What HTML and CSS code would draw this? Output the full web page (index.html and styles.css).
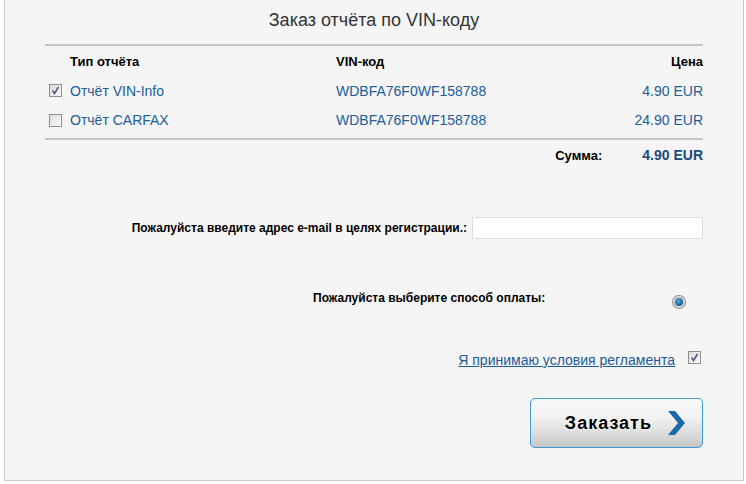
FILE: index.html
```html
<!DOCTYPE html>
<html lang="ru">
<head>
<meta charset="utf-8">
<link rel="stylesheet" href="styles.css">
</head>
<body>
<div class="panel">
  <h1 class="title">Заказ отчёта по VIN-коду</h1>
  <div class="table">
    <div class="row head">
      <div class="c-type">Тип отчёта</div>
      <div class="c-vin">VIN-код</div>
      <div class="c-price">Цена</div>
    </div>
    <div class="row item first">
      <div class="c-type"><span class="cb"><svg viewBox="0 0 13 13" width="13" height="13"><path d="M3.5 6.5 L5.5 9.5 L9.5 3" fill="none" stroke="#4a5a8c" stroke-width="1.6"/></svg></span>Отчёт VIN-Info</div>
      <div class="c-vin">WDBFA76F0WF158788</div>
      <div class="c-price">4.90 EUR</div>
    </div>
    <div class="row item last">
      <div class="c-type"><span class="cb"></span>Отчёт CARFAX</div>
      <div class="c-vin">WDBFA76F0WF158788</div>
      <div class="c-price">24.90 EUR</div>
    </div>
    <div class="row sum">
      <div class="sum-label">Сумма:</div>
      <div class="sum-val">4.90 EUR</div>
    </div>
  </div>
  <div class="email">
    <span class="lbl">Пожалуйста введите адрес e-mail в целях регистрации.:</span>
    <span class="input"></span>
  </div>
  <div class="pay">
    <span class="lbl">Пожалуйста выберите способ оплаты:</span>
    <span class="radio"></span>
  </div>
  <div class="terms">
    <a class="link" href="#">Я принимаю условия регламента</a>
    <span class="cb"><svg viewBox="0 0 13 13" width="13" height="13"><path d="M3.5 6.5 L5.5 9.5 L9.5 3" fill="none" stroke="#4a5a8c" stroke-width="1.6"/></svg></span>
  </div>
  <div class="actions">
    <button class="order">Заказать<svg class="chev" viewBox="0 0 20 24" width="20" height="24"><path d="M2 0 H9 L19 12 L9 24 H2 L12 12 Z" fill="#1b6aa8"/></svg></button>
  </div>
</div>
</body>
</html>
```
FILE: styles.css
```css
html, body { margin: 0; padding: 0; background: #fff; }
body { font-family: "Liberation Sans", Arial, sans-serif; color: #000; }
.panel {
  margin-left: 4px;
  width: 740px;
  height: 481px;
  background: #f5f5f5;
  border-left: 1px solid #c8c8c8;
  border-right: 1px solid #c8c8c8;
  border-bottom: 1px solid #c8c8c8;
  padding: 0 40px;
  box-sizing: border-box;
}
.title {
  margin: 0;
  height: 46px;
  box-sizing: border-box;
  padding-top: 10px;
  text-align: center;
  font-weight: normal;
  font-size: 18px;
  line-height: 20px;
  color: #333;
  border-bottom: 2px solid #c4c4c4;
}
.row { display: flex; align-items: center; font-size: 14px; box-sizing: border-box; }
.c-type { width: 291px; box-sizing: border-box; display: flex; align-items: center; }
.c-vin { flex: 1; }
.c-price { width: 120px; text-align: right; }
.head { height: 30px; font-weight: bold; font-size: 13px; }
.head .c-type { padding-left: 25px; }
.item { color: #215d98; }
.item .c-type { padding-left: 4px; }
.item.first { height: 29px; }
.item.last {
  height: 35px;
  align-items: flex-start;
  padding-top: 7px;
  border-bottom: 2px solid #c4c4c4;
}
.cb {
  display: inline-block;
  width: 11px; height: 11px;
  border: 1px solid #8f8f8f;
  background: linear-gradient(135deg, #dcdcdc, #fbfbfb);
  margin-right: 8px;
  position: relative;
  flex: none;
}
.cb svg { position: absolute; left: -1px; top: -1px; }
.sum { height: 30px; justify-content: flex-end; font-weight: bold; font-size: 13px; }
.sum-label { margin-right: 40px; }
.sum-val { color: #1a4a7c; font-size: 14px; }
.email {
  margin-top: 47px;
  display: flex; justify-content: flex-end; align-items: center;
  height: 22px;
}
.lbl { font-weight: bold; font-size: 12px; }
.input {
  width: 229px; height: 20px;
  margin-left: 5px;
  background: #fff;
  border: 1px solid #dedede;
}
.pay {
  margin-top: 49px;
  display: flex; align-items: center;
  height: 20px;
  padding-left: 268px;
}
.radio {
  margin-left: 128px;
  margin-top: 8px;
  width: 8px; height: 8px;
  border-radius: 50%;
  border: 2px solid #d0d0d0;
  background: radial-gradient(circle at 40% 35%, #5aa6d8 0, #1d6aa5 60%, #14457a 100%);
  box-shadow: 0 0 0 1px #8a8a8a;
}
.terms {
  margin-top: 43px;
  display: flex; justify-content: flex-end; align-items: center;
  height: 18px;
}
.link { color: #1b5c98; font-size: 14px; text-decoration: underline; margin-right: 13px; }
.terms .cb { margin-right: 2px; margin-top: -5px; }
.actions { margin-top: 29px; display: flex; justify-content: flex-end; }
.order {
  width: 173px; height: 50px;
  border: 1px solid #3f9dd6;
  border-radius: 5px;
  background: linear-gradient(180deg, #f9f9f9 0%, #f1f1f1 40%, #d3d3d3 85%, #c4c4c4 100%);
  font-family: "Liberation Sans", Arial, sans-serif;
  font-weight: bold;
  font-size: 18px;
  letter-spacing: 1px;
  color: #000;
  text-shadow: 0 0 3px #fff, 0 0 2px #fff;
  display: flex; align-items: center; justify-content: flex-end;
  padding: 0 16px 0 0;
  box-sizing: border-box;
  cursor: pointer;
}
.chev { margin-left: 14px; }
```
